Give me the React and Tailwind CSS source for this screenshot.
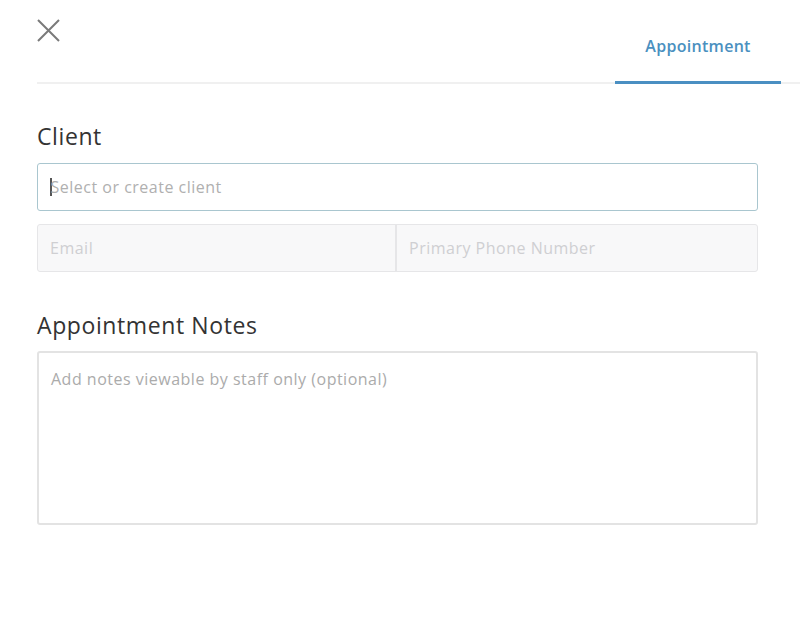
export default function App() {
  return (
    <div className="w-[800px] h-[635px] bg-white overflow-hidden" style={{ fontFamily: "'Open Sans', sans-serif" }}>
      <div className="ml-[37px] flex justify-between border-b-2 border-[#f0f0f0] h-[84px]">
        <button className="mt-[19px] w-[23px] h-[23px] self-start">
          <svg viewBox="0 0 23 23" width="23" height="23" fill="none" stroke="#7a7a7a" strokeWidth="2">
            <path d="M1 1 L22 22 M22 1 L1 22" />
          </svg>
        </button>
        <div className="mr-[19px] w-[166px] flex flex-col">
          <div className="flex-1 flex items-center justify-center pt-[10px] text-[16px] tracking-[0.3px] font-semibold text-[#4a90c0]">Appointment</div>
          <div className="h-[3px] bg-[#4a8fc2] mb-[-2px]"></div>
        </div>
      </div>
      <div className="ml-[37px] w-[721px]">
        <div className="mt-[37px] text-[23px] tracking-[0.6px] leading-[30px] text-[#333]">Client</div>
        <div className="mt-[12px] h-[48px] border border-[#a9c6cf] rounded-[3px] flex items-center pl-[12px] text-[16px] tracking-[0.5px] text-[#b0b0b0]">
          <span className="w-[1.5px] h-[18px] bg-[#555] mr-[-1px]"></span>
          <span>Select or create client</span>
        </div>
        <div className="mt-[13px] h-[48px] flex border border-[#e6e6e8] rounded-[3px] bg-[#f8f8f9] text-[16px] tracking-[0.5px] text-[#cfcfd2]">
          <div className="w-[359px] border-r-2 border-[#e6e6e8] flex items-center pl-[12px]">Email</div>
          <div className="flex-1 flex items-center pl-[12px]">Primary Phone Number</div>
        </div>
        <div className="mt-[38px] text-[23px] tracking-[0.6px] leading-[30px] text-[#333]">Appointment Notes</div>
        <div className="mt-[11px] h-[174px] border-2 border-[#e3e3e3] rounded-[3px] pl-[12px] pt-[14px] text-[16px] tracking-[0.5px] text-[#ababab]">
          Add notes viewable by staff only (optional)
        </div>
      </div>
    </div>
  );
}
